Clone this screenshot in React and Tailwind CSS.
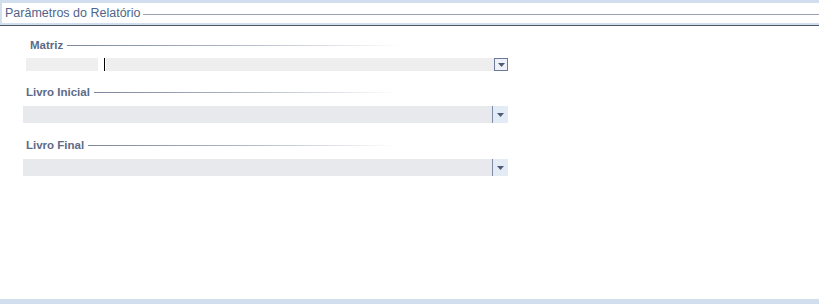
export default function App() {
  const font = { fontFamily: '"Liberation Sans", Arial, sans-serif' };
  const Arrow = () => (
    <svg width="7" height="4" viewBox="0 0 7 4"><path d="M0 0h7L3.5 4z" fill="#4d5b78" /></svg>
  );
  const Label = ({ text, pl, lineW }) => (
    <div className={`flex items-center gap-[4px] ${pl}`}>
      <span className="text-[11.5px] font-bold leading-[13px] text-[#5d6b87]">{text}</span>
      <div className={`h-px ${lineW} bg-gradient-to-r from-[#7d879d] via-[#b0b7c6] to-transparent`} />
    </div>
  );
  const Combo = () => (
    <div className="flex h-[17px] w-[485px] ml-[23px] bg-[#e8e9ec]">
      <div className="flex-1" />
      <div className="w-px bg-[#7e8ca6]" />
      <div className="flex w-[15px] items-center justify-center bg-[#e3ebf5]"><Arrow /></div>
    </div>
  );
  return (
    <div className="flex h-[304px] w-[819px] flex-col bg-white" style={font}>
      <div className="h-[3px] bg-[#d0deee]" />
      <div className="flex h-[20px] items-center border-l-2 border-[#d0deee] pl-[3px]">
        <span className="text-[12.5px] leading-[14px] text-[#4f6488]">Parâmetros do Relatório</span>
        <div className="ml-[3px] mt-[3px] h-px flex-1 bg-[#98a2b4]" />
      </div>
      <div className="h-[2px] bg-[#d0deee]" />
      <div className="h-px bg-[#4f5563]" />
      <div className="flex-1 flex-col">
        <div className="pt-[13px]">
          <Label text="Matriz" pl="pl-[30px]" lineW="w-[335px]" />
        </div>
        <div className="mt-[6px] flex h-[13px] items-stretch">
          <div className="ml-[26px] w-[72px] bg-[#efefef]" />
          <div className="ml-[6px] w-px bg-black" />
          <div className="ml-px w-[388px] bg-[#eeeeee]" />
          <div className="flex w-[14px] items-center justify-center border border-[#6a7a98] bg-[#eef2f8]"><Arrow /></div>
        </div>
        <div className="mt-[15px]">
          <Label text="Livro Inicial" pl="pl-[26px]" lineW="w-[305px]" />
        </div>
        <div className="mt-[7px]"><Combo /></div>
        <div className="mt-[16px]">
          <Label text="Livro Final" pl="pl-[26px]" lineW="w-[310px]" />
        </div>
        <div className="mt-[7px]"><Combo /></div>
      </div>
      <div className="h-[5px] bg-[#d0deee]" />
    </div>
  );
}
